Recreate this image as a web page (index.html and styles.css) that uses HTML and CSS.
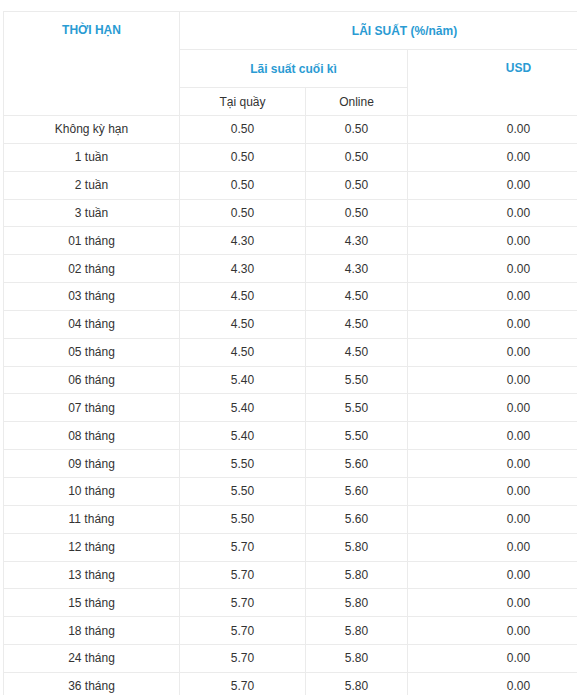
FILE: index.html
```html
<!DOCTYPE html>
<html lang="vi">
<head>
<meta charset="utf-8">
<title>Lãi suất</title>
<link rel="stylesheet" href="styles.css">
</head>
<body>
<table class="rates">
  <colgroup>
    <col class="c-term">
    <col class="c-counter">
    <col class="c-online">
    <col class="c-usd">
  </colgroup>
  <thead>
    <tr class="h1">
      <th rowspan="3" class="top">THỜI HẠN</th>
      <th colspan="3">LÃI SUẤT (%/năm)</th>
    </tr>
    <tr class="h2">
      <th colspan="2">Lãi suất cuối kì</th>
      <th rowspan="2" class="top">USD</th>
    </tr>
    <tr class="h3">
      <td>Tại quầy</td>
      <td>Online</td>
    </tr>
  </thead>
  <tbody>
    <tr><td>Không kỳ hạn</td><td>0.50</td><td>0.50</td><td>0.00</td></tr>
    <tr><td>1 tuần</td><td>0.50</td><td>0.50</td><td>0.00</td></tr>
    <tr><td>2 tuần</td><td>0.50</td><td>0.50</td><td>0.00</td></tr>
    <tr><td>3 tuần</td><td>0.50</td><td>0.50</td><td>0.00</td></tr>
    <tr><td>01 tháng</td><td>4.30</td><td>4.30</td><td>0.00</td></tr>
    <tr><td>02 tháng</td><td>4.30</td><td>4.30</td><td>0.00</td></tr>
    <tr><td>03 tháng</td><td>4.50</td><td>4.50</td><td>0.00</td></tr>
    <tr><td>04 tháng</td><td>4.50</td><td>4.50</td><td>0.00</td></tr>
    <tr><td>05 tháng</td><td>4.50</td><td>4.50</td><td>0.00</td></tr>
    <tr><td>06 tháng</td><td>5.40</td><td>5.50</td><td>0.00</td></tr>
    <tr><td>07 tháng</td><td>5.40</td><td>5.50</td><td>0.00</td></tr>
    <tr><td>08 tháng</td><td>5.40</td><td>5.50</td><td>0.00</td></tr>
    <tr><td>09 tháng</td><td>5.50</td><td>5.60</td><td>0.00</td></tr>
    <tr><td>10 tháng</td><td>5.50</td><td>5.60</td><td>0.00</td></tr>
    <tr><td>11 tháng</td><td>5.50</td><td>5.60</td><td>0.00</td></tr>
    <tr><td>12 tháng</td><td>5.70</td><td>5.80</td><td>0.00</td></tr>
    <tr><td>13 tháng</td><td>5.70</td><td>5.80</td><td>0.00</td></tr>
    <tr><td>15 tháng</td><td>5.70</td><td>5.80</td><td>0.00</td></tr>
    <tr><td>18 tháng</td><td>5.70</td><td>5.80</td><td>0.00</td></tr>
    <tr><td>24 tháng</td><td>5.70</td><td>5.80</td><td>0.00</td></tr>
    <tr><td>36 tháng</td><td>5.70</td><td>5.80</td><td>0.00</td></tr>
  </tbody>
</table>
</body>
</html>
```

FILE: styles.css
```css
html, body {
  margin: 0;
  padding: 0;
  background: #ffffff;
}

body {
  padding: 11px 0 0 3px;
  font-family: "Liberation Sans", Arial, sans-serif;
  font-size: 12px;
  color: #333333;
  overflow: hidden;
}

.rates {
  border-collapse: collapse;
  table-layout: fixed;
  width: 626px;
}

.c-term { width: 176px; }
.c-counter { width: 126px; }
.c-online { width: 102px; }
.c-usd { width: 222px; }

.rates th,
.rates td {
  border: 1px solid #ebebeb;
  text-align: center;
  vertical-align: middle;
  padding: 0;
  line-height: 14px;
}

.rates th {
  color: #2a9bd3;
  font-weight: bold;
  font-size: 12px;
}

.rates th.top {
  vertical-align: top;
  padding-top: 11px;
}

.h1, .h2 { height: 38px; }
.h3 { height: 28px; }

.rates tbody tr { height: 27.85px; }
.rates tbody td { color: #333333; }
```
